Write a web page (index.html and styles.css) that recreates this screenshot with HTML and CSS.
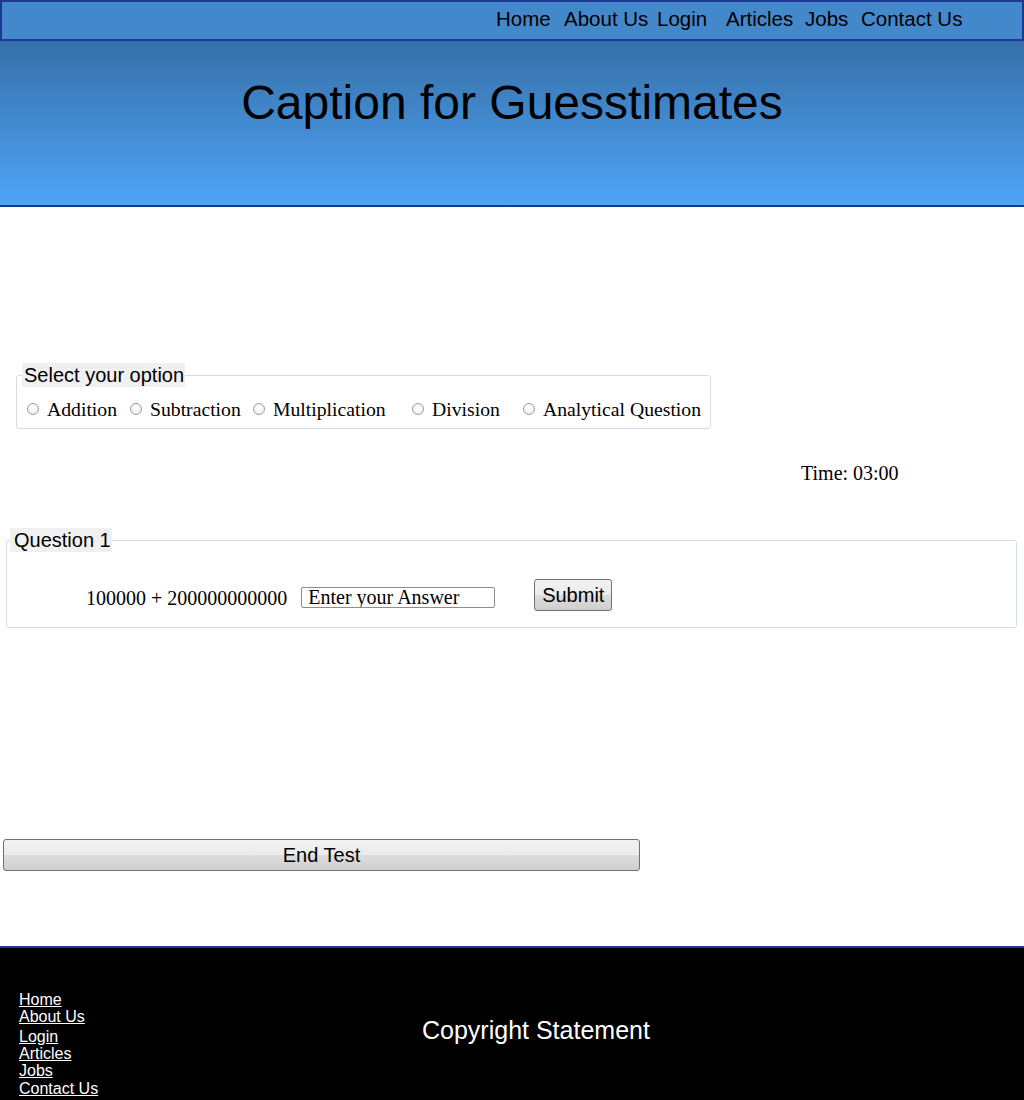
FILE: index.html
```html
<!DOCTYPE html>
<html>
<head>
<meta charset="utf-8">
<title>Guesstimates</title>
<link rel="stylesheet" href="styles.css">
</head>
<body>
<nav class="topnav">
  <a class="nav-link nav-home" href="#">Home</a>
  <a class="nav-link nav-about" href="#">About Us</a>
  <a class="nav-link nav-login" href="#">Login</a>
  <a class="nav-link nav-articles" href="#">Articles</a>
  <a class="nav-link nav-jobs" href="#">Jobs</a>
  <a class="nav-link nav-contact" href="#">Contact Us</a>
</nav>
<header class="banner">
  <h1 class="title">Caption for Guesstimates</h1>
</header>
<main class="content">
  <fieldset class="box options">
    <legend class="box-legend">Select your option</legend>
    <div class="option-row">
      <label class="opt opt-add"><input type="radio" name="op" class="radio">Addition</label>
      <label class="opt opt-sub"><input type="radio" name="op" class="radio">Subtraction</label>
      <label class="opt opt-mul"><input type="radio" name="op" class="radio">Multiplication</label>
      <label class="opt opt-div"><input type="radio" name="op" class="radio">Division</label>
      <label class="opt opt-ana"><input type="radio" name="op" class="radio">Analytical Question</label>
    </div>
  </fieldset>
  <div class="timer">Time: 03:00</div>
  <fieldset class="box question">
    <legend class="box-legend q-legend">Question 1</legend>
    <div class="q-row">
      <span class="q-text">100000 + 200000000000</span>
      <input class="answer" type="text" value="Enter your Answer">
      <button class="btn submit" type="button">Submit</button>
    </div>
  </fieldset>
  <button class="btn end-test" type="button">End Test</button>
</main>
<footer class="footer">
  <div class="foot-links">
    <a class="foot-link" href="#">Home</a>
    <a class="foot-link" href="#">About Us</a>
    <a class="foot-link foot-gap" href="#">Login</a>
    <a class="foot-link" href="#">Articles</a>
    <a class="foot-link" href="#">Jobs</a>
    <a class="foot-link" href="#">Contact Us</a>
  </div>
  <div class="copyright">Copyright Statement</div>
</footer>
</body>
</html>
```
FILE: styles.css
```css
html, body {
  margin: 0;
  padding: 0;
  background: #ffffff;
}
body {
  font-family: "Liberation Serif", "Times New Roman", serif;
  color: #000;
}

.topnav {
  height: 41px;
  box-sizing: border-box;
  border: 2px solid #1d3a92;
  background: #4488cc;
  display: flex;
  align-items: flex-start;
  padding: 0 0 0 494px;
}
.nav-link {
  font-family: "Liberation Sans", Arial, sans-serif;
  font-size: 20.5px;
  line-height: 33px;
  color: #000;
  text-decoration: none;
  white-space: nowrap;
}
.nav-home { width: 68px; }
.nav-about { width: 93px; }
.nav-login { width: 69px; }
.nav-articles { width: 79px; }
.nav-jobs { width: 56px; }

.banner {
  background: linear-gradient(#3670a8, #4fa4f7);
  border-bottom: 2px solid #1d3a92;
  height: 166px;
  box-sizing: border-box;
  padding-top: 34px;
}
.title {
  margin: 0;
  font-family: "Liberation Sans", Arial, sans-serif;
  font-weight: normal;
  font-size: 48px;
  line-height: 56px;
  text-align: center;
}

.content {
  padding-top: 156px;
}

.box {
  margin: 0;
  padding: 0;
  border: 1px solid #d3dde5;
  border-radius: 3px;
  box-sizing: border-box;
  min-width: 0;
}
.box-legend {
  font-family: "Liberation Sans", Arial, sans-serif;
  font-size: 20px;
  line-height: 24px;
  background: #f0f0f0;
  padding: 0 1px 0 2px;
  margin-left: 5px;
}
.options {
  margin-left: 16px;
  width: 695px;
}
.option-row {
  display: flex;
  align-items: center;
  padding: 10px 0 7px 10px;
  font-size: 19.7px;
  line-height: 24px;
}
.opt {
  display: inline-flex;
  align-items: center;
  white-space: nowrap;
  flex: none;
}
.radio {
  appearance: none;
  -webkit-appearance: none;
  width: 12px;
  height: 12px;
  margin: 0 8px 0 0;
  border: 1px solid #a19c96;
  border-radius: 50%;
  background: radial-gradient(circle at 50% 40%, #ffffff 0%, #f4f4f4 60%, #e0e0e0 100%);
  box-sizing: border-box;
  flex: none;
}
.opt-add { width: 103px; }
.opt-sub { width: 123px; }
.opt-mul { width: 159px; }
.opt-div { width: 111px; }

.timer {
  margin-top: 32px;
  padding-left: 801px;
  font-size: 20px;
  line-height: 24px;
}

.question {
  margin-top: 43px;
  margin-left: 6px;
  width: 1011px;
}
.q-legend {
  margin-left: 3px;
  padding: 0 1px 0 4px;
}
.q-row {
  display: flex;
  align-items: flex-start;
  padding: 27px 0 16px 79px;
}
.q-text {
  margin-top: 7px;
  font-size: 20px;
  line-height: 24px;
}
.answer {
  margin: 8px 0 0 14px;
  width: 194px;
  height: 21px;
  box-sizing: border-box;
  padding: 0 6px;
  border: 1px solid #938c86;
  border-radius: 2px;
  font-family: "Liberation Serif", "Times New Roman", serif;
  font-size: 20px;
  line-height: 19px;
  color: #000;
  background: #fff;
  outline: none;
}

.btn {
  font-family: "Liberation Sans", Arial, sans-serif;
  font-size: 20px;
  color: #000;
  border: 1px solid #707070;
  border-radius: 3px;
  background: linear-gradient(#f2f2f2 0%, #ebebeb 50%, #dddddd 50%, #cfcfcf 100%);
  box-sizing: border-box;
  padding: 0;
}
.submit {
  margin-left: 39px;
  width: 78px;
  height: 32px;
}
.end-test {
  display: block;
  margin: 211px 0 0 3px;
  width: 637px;
  height: 32px;
}

.footer {
  margin-top: 75px;
  border-top: 2px solid #1d3a92;
  background: #000;
  display: flex;
  align-items: flex-start;
  padding: 43px 0 40px 0;
}
.foot-links {
  width: 100px;
  box-sizing: border-box;
  padding-left: 19px;
  display: flex;
  flex-direction: column;
  align-items: flex-start;
}
.foot-link {
  font-family: "Liberation Sans", Arial, sans-serif;
  font-size: 16px;
  line-height: 17.2px;
  color: #fff;
  text-decoration: underline;
}
.foot-gap { margin-top: 2.5px; }
.copyright {
  margin: 24px 0 0 322px;
  font-family: "Liberation Sans", Arial, sans-serif;
  font-size: 25px;
  line-height: 30px;
  color: #fff;
}
```
